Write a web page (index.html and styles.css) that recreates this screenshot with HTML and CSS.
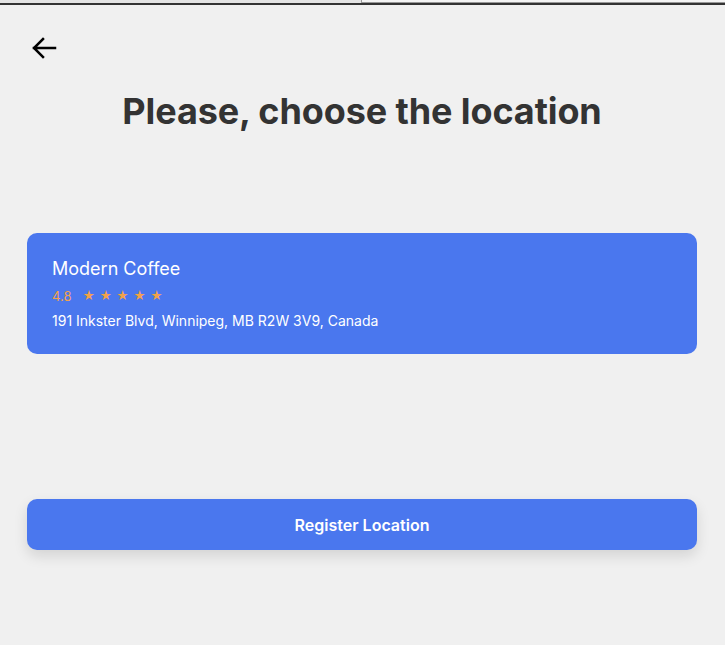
FILE: index.html
```html
<!DOCTYPE html>
<html>
<head>
<meta charset="utf-8">
<link rel="stylesheet" href="styles.css">
</head>
<body>
<div class="topbar"><div class="topbar-left"></div><div class="topbar-right"></div></div>
<main class="page">
  <button class="back" aria-label="Back">
    <svg width="26" height="22" viewBox="0 0 26 22"><path d="M24 11H3M12 2L3 11l9 9" fill="none" stroke="#000" stroke-width="2.5" stroke-linecap="square"/></svg>
  </button>
  <h1 class="title">Please, choose the location</h1>
  <div class="card">
    <div class="card-name">Modern Coffee</div>
    <div class="card-rating"><span class="rating-num">4.8</span><span class="stars">★ ★ ★ ★ ★</span></div>
    <div class="card-addr">191 Inkster Blvd, Winnipeg, MB R2W 3V9, Canada</div>
  </div>
  <button class="register">Register Location</button>
</main>
</body>
</html>
```
FILE: styles.css
```css
html, body { margin: 0; padding: 0; }
body {
  background: #f0f0f0;
  font-family: Inter, "Noto Sans", sans-serif;
  width: 725px;
  height: 645px;
  overflow: hidden;
}
.topbar {
  display: flex;
  height: 3px;
  border-bottom: 2px solid #333;
}
.topbar-left { width: 361px; background: #e4e4e4; border-right: 1px solid #999; }
.topbar-right { flex: 1; background: #f4f4f4; border-bottom: 1px solid #999; height: 2px; }
.page {
  display: flex;
  flex-direction: column;
  padding: 0 28px 0 27px;
}
.back {
  align-self: flex-start;
  background: none;
  border: 0;
  padding: 0;
  margin: 32px 0 0 4px;
  width: 26px;
  height: 22px;
  cursor: pointer;
}
.back svg { display: block; }
.title {
  margin: 29px 0 0;
  text-align: center;
  font-size: 36px;
  font-weight: 700;
  color: #333;
  letter-spacing: -0.1px;
  line-height: 46px;
}
.card {
  margin-top: 99px;
  background: #4a77ee;
  border-radius: 10px;
  padding: 25px 25px 23px;
  color: #fff;
  height: 121px;
  box-sizing: border-box;
}
.card-name { font-size: 18px; font-weight: 400; line-height: 22px; }
.card-rating {
  margin-top: 8px;
  display: flex;
  gap: 11px;
  color: #f2a24a;
  font-size: 13px;
  line-height: 16px;
}
.stars { font-size: 12px; letter-spacing: 0.5px; }
.card-addr { margin-top: 8px; font-size: 14px; line-height: 17px; }
.register {
  margin-top: 145px;
  height: 51px;
  border: 0;
  border-radius: 10px;
  background: #4a77ee;
  color: #fff;
  font-family: Inter, sans-serif;
  font-size: 16px;
  font-weight: 600;
  box-shadow: 0 6px 14px rgba(0,0,0,0.12);
  cursor: pointer;
}
```
